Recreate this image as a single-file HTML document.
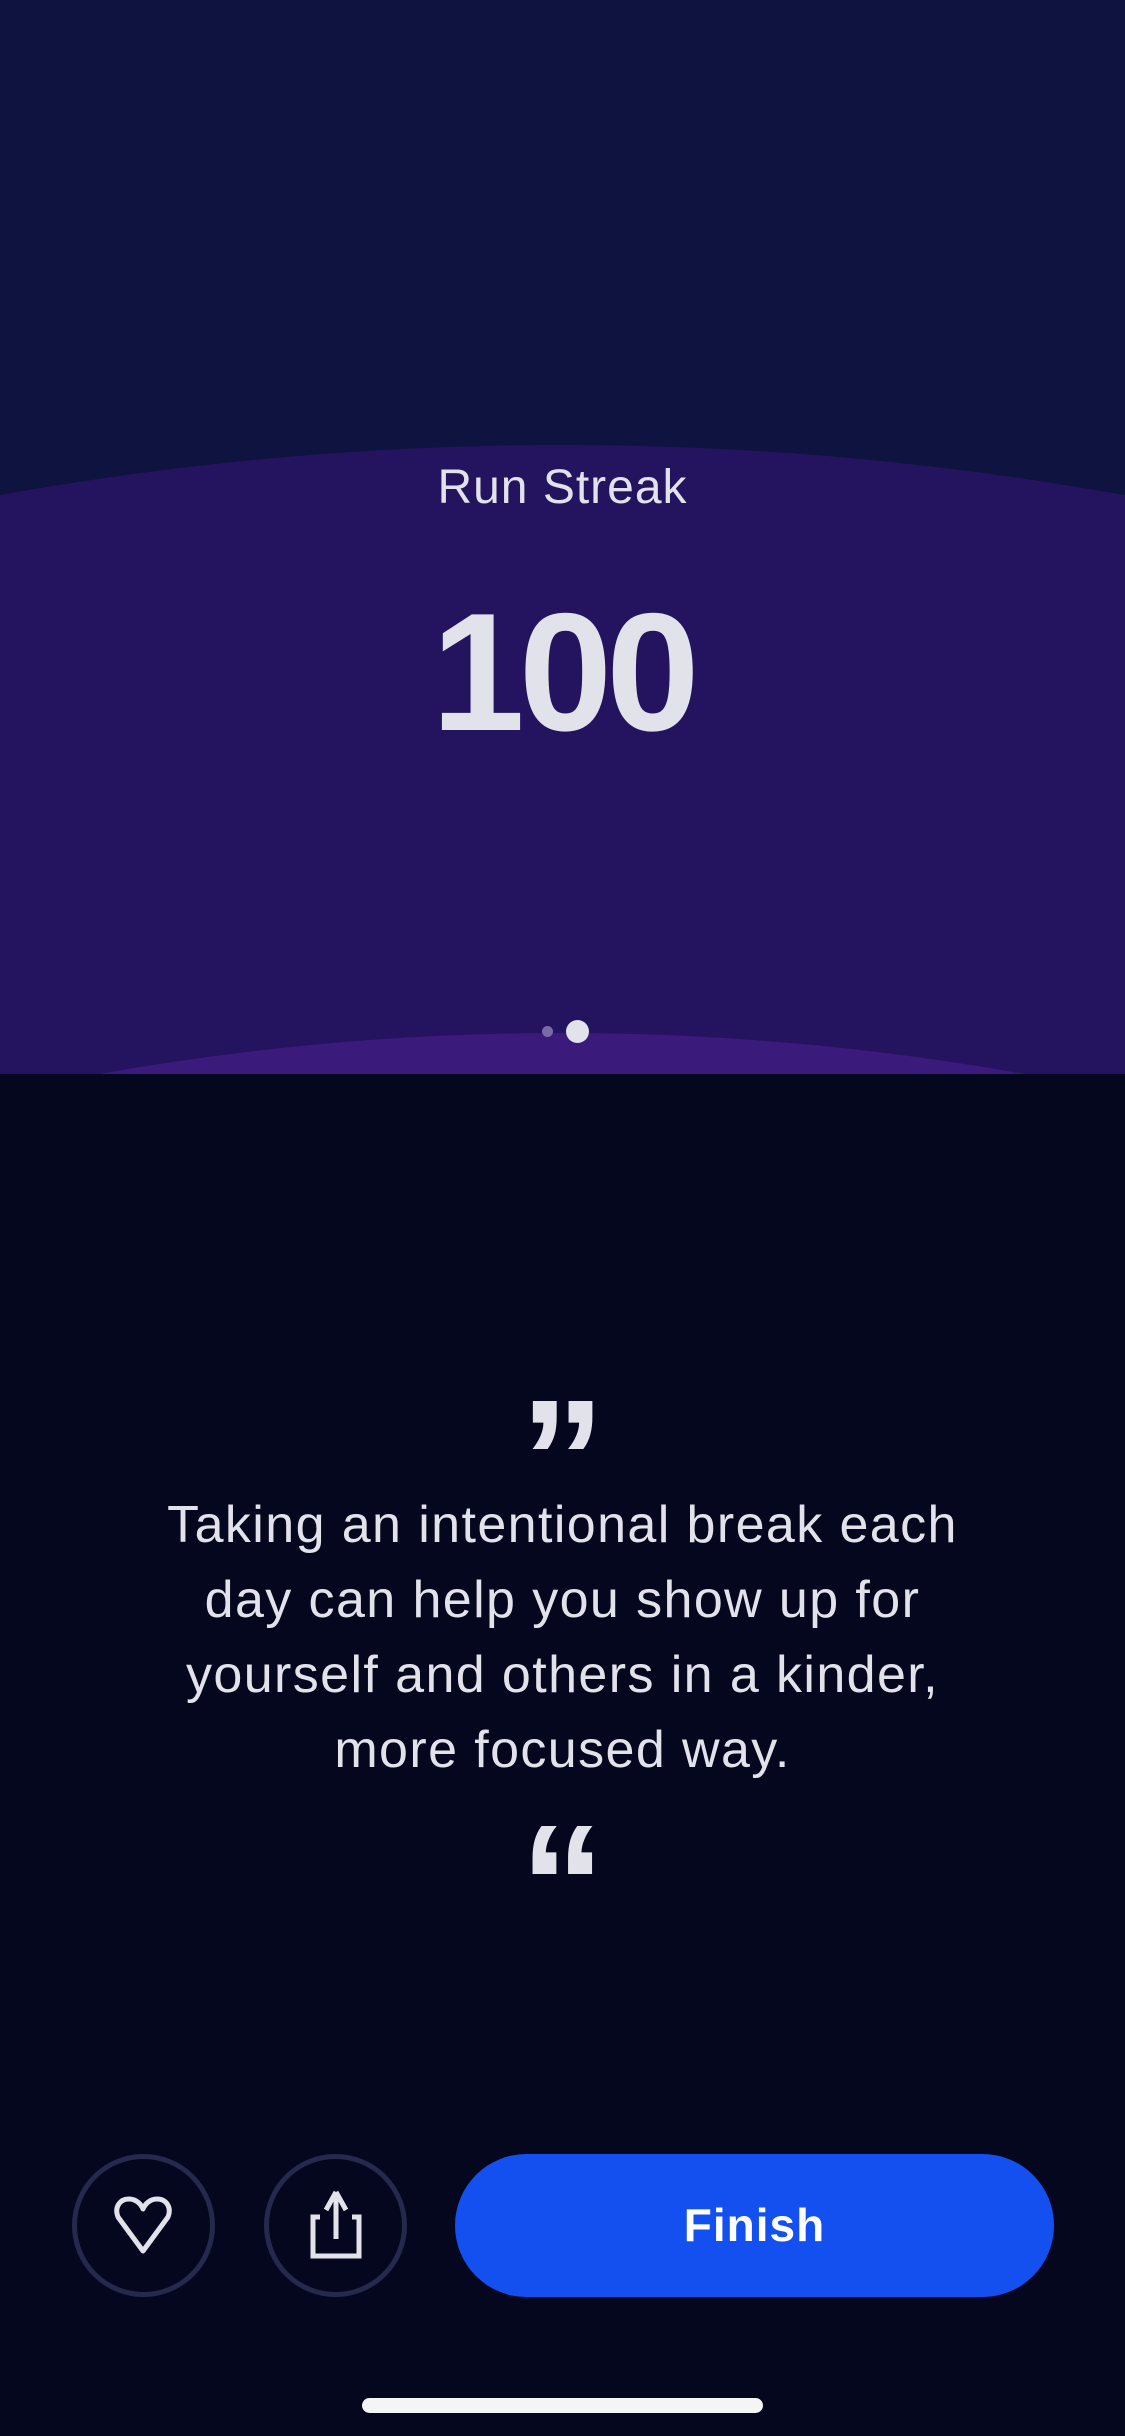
<!DOCTYPE html>
<html><head><meta charset="utf-8"><style>
*{margin:0;padding:0;box-sizing:border-box}
html,body{width:1125px;height:2436px;overflow:hidden}
body{background:#05071f;position:relative;font-family:"Liberation Sans",sans-serif;color:#e2e2ea}
.top{position:absolute;left:0;top:0;width:1125px;height:1074px;background:#0f1340;overflow:hidden}
.arc{position:absolute;left:-2621px;top:445px;width:6366px;height:6366px;border-radius:50%;background:#24145f}
.arc2{position:absolute;left:-2065px;top:1033px;width:5254px;height:5254px;border-radius:50%;background:#3a1a7a}
.t{position:absolute;left:0;width:1125px;text-align:center;overflow:hidden}
</style></head><body>
<div class="top"><div class="arc"></div><div class="arc2"></div></div>
<div class="t" style="top:460px;font-size:48px;letter-spacing:1px">Run Streak</div>
<div class="t" style="top:572px;font-size:168px;font-weight:bold;letter-spacing:-6px;line-height:200px">100</div>
<div style="position:absolute;left:542px;top:1026px;width:11px;height:11px;border-radius:50%;background:#7a6aa8"></div>
<div style="position:absolute;left:566px;top:1020px;width:23px;height:23px;border-radius:50%;background:#e2e2ea"></div>
<div class="t" style="top:1375px;font-size:170px;font-weight:bold;line-height:170px;height:100px">”</div>
<div class="t" style="top:1488px;font-size:52px;line-height:75px;letter-spacing:1.4px">Taking an intentional break each<br>day can help you show up for<br>yourself and others in a kinder,<br>more focused way.</div>
<div class="t" style="top:1800px;font-size:170px;font-weight:bold;line-height:170px;height:100px">“</div>
<div style="position:absolute;left:72px;top:2154px;width:143px;height:143px;border-radius:50%;border:5px solid #252a4c"></div>
<svg style="position:absolute;left:112px;top:2195px" width="62" height="62" viewBox="0 0 62 62"><path d="M31 56 L6 22 C2 12 8 4 17 4 C24 4 29 9 31 14 C33 9 38 4 45 4 C54 4 60 12 56 22 Z" fill="none" stroke="#e2e2ea" stroke-width="5" stroke-linejoin="round"/></svg>
<div style="position:absolute;left:264px;top:2154px;width:143px;height:143px;border-radius:50%;border:5px solid #252a4c"></div>
<svg style="position:absolute;left:306px;top:2190px" width="60" height="70" viewBox="0 0 60 70"><path d="M14 27 H7 V66 H53 V27 H46" fill="none" stroke="#e2e2ea" stroke-width="5"/><path d="M30 49 V6" stroke="#e2e2ea" stroke-width="5"/><path d="M30 2 L20 20 M30 2 L40 20" stroke="#e2e2ea" stroke-width="5"/></svg>
<div style="position:absolute;left:455px;top:2154px;width:599px;height:143px;border-radius:72px;background:#1450f0;color:#fff;font-size:46px;font-weight:bold;text-align:center;line-height:143px;letter-spacing:1px">Finish</div>
<div style="position:absolute;left:362px;top:2398px;width:401px;height:15px;border-radius:8px;background:#f5f5f5"></div>
</body></html>
